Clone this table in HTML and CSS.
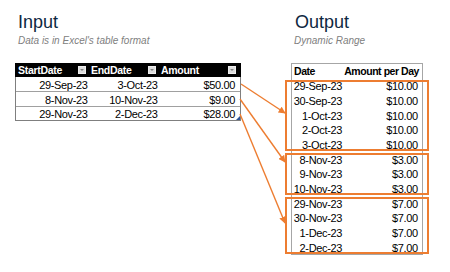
FILE: index.html
```html
<!DOCTYPE html>
<html lang="en">
<head>
<meta charset="utf-8">
<title>Input / Output</title>
<link rel="stylesheet" href="styles.css">
</head>
<body>
<div class="sheet">
  <section class="panel panel-input">
    <h1 class="title">Input</h1>
    <p class="subtitle">Data is in Excel's table format</p>
    <div class="xl-table">
      <div class="xl-head">
        <div class="hcell">StartDate<span class="dd"></span></div>
        <div class="hcell">EndDate<span class="dd"></span></div>
        <div class="hcell hcell-last">Amount<span class="dd"></span></div>
      </div>
      <div class="xl-row"><div class="cell">29-Sep-23</div><div class="cell">3-Oct-23</div><div class="cell cell-last">$50.00</div></div>
      <div class="xl-row"><div class="cell">8-Nov-23</div><div class="cell">10-Nov-23</div><div class="cell cell-last">$9.00</div></div>
      <div class="xl-row"><div class="cell">29-Nov-23</div><div class="cell">2-Dec-23</div><div class="cell cell-last">$28.00</div></div>
      <span class="resize"></span>
    </div>
  </section>
  <section class="panel panel-output">
    <h1 class="title">Output</h1>
    <p class="subtitle">Dynamic Range</p>
    <div class="out-table">
      <div class="out-head"><div class="oh-date">Date</div><div class="oh-amt">Amount per Day</div></div>
      <div class="group">
        <div class="out-row"><div class="od">29-Sep-23</div><div class="oa">$10.00</div></div>
        <div class="out-row"><div class="od">30-Sep-23</div><div class="oa">$10.00</div></div>
        <div class="out-row"><div class="od">1-Oct-23</div><div class="oa">$10.00</div></div>
        <div class="out-row"><div class="od">2-Oct-23</div><div class="oa">$10.00</div></div>
        <div class="out-row"><div class="od">3-Oct-23</div><div class="oa">$10.00</div></div>
      </div>
      <div class="group">
        <div class="out-row"><div class="od">8-Nov-23</div><div class="oa">$3.00</div></div>
        <div class="out-row"><div class="od">9-Nov-23</div><div class="oa">$3.00</div></div>
        <div class="out-row"><div class="od">10-Nov-23</div><div class="oa">$3.00</div></div>
      </div>
      <div class="group">
        <div class="out-row"><div class="od">29-Nov-23</div><div class="oa">$7.00</div></div>
        <div class="out-row"><div class="od">30-Nov-23</div><div class="oa">$7.00</div></div>
        <div class="out-row"><div class="od">1-Dec-23</div><div class="oa">$7.00</div></div>
        <div class="out-row"><div class="od">2-Dec-23</div><div class="oa">$7.00</div></div>
      </div>
    </div>
  </section>
  <svg class="arrows" width="450" height="272" viewBox="0 0 450 272">
    <defs>
      <marker id="ah" viewBox="0 0 10 10" refX="9" refY="5" markerWidth="5" markerHeight="5" orient="auto" markerUnits="strokeWidth">
        <path d="M0 0 L10 5 L0 10 z" fill="#ed7d31"/>
      </marker>
    </defs>
    <line x1="241" y1="84" x2="285" y2="113" stroke="#ed7d31" stroke-width="1.4" marker-end="url(#ah)"/>
    <line x1="240" y1="99" x2="285" y2="162" stroke="#ed7d31" stroke-width="1.4" marker-end="url(#ah)"/>
    <line x1="240" y1="114" x2="285" y2="223" stroke="#ed7d31" stroke-width="1.4" marker-end="url(#ah)"/>
  </svg>
</div>
</body>
</html>
```

FILE: styles.css
```css
body {
  margin: 0;
  background: #ffffff;
}

.sheet {
  position: relative;
  width: 450px;
  height: 272px;
  box-sizing: border-box;
  padding: 10.5px 0 0 15px;
  display: flex;
  gap: 50px;
  font-family: "Liberation Sans", Arial, sans-serif;
  color: #000;
  white-space: nowrap;
}

.panel {
  display: flex;
  flex-direction: column;
}

.panel-input {
  width: 226px;
}

.panel-output {
  width: 132px;
}

.title {
  margin: 0;
  font-size: 18px;
  line-height: 22px;
  font-weight: normal;
  color: #0e2841;
  padding-left: 3px;
}

.panel-output .title {
  padding-left: 4px;
}

.subtitle {
  margin: 2.5px 0 0;
  font-style: italic;
  font-size: 10px;
  line-height: 12px;
  color: #808080;
  padding-left: 3px;
}

/* ---------- Input (Excel table) ---------- */
.xl-table {
  position: relative;
  margin-top: 15.5px;
  border: 1px solid #7f7f7f;
  border-top: none;
  font-size: 11px;
  letter-spacing: -0.35px;
}

.xl-head,
.xl-row {
  display: grid;
  grid-template-columns: 73px 70px 81px;
}

.xl-head {
  height: 14.5px;
  background: #000;
  color: #fff;
  font-weight: bold;
  font-size: 10.5px;
  letter-spacing: -0.3px;
  margin: 0 -1px;
  padding: 0 1px;
}

.hcell {
  display: flex;
  align-items: center;
  justify-content: space-between;
  padding: 0 3px 0 2px;
  line-height: 14.5px;
}

.hcell-last {
  padding-right: 4px;
}

.dd {
  position: relative;
  width: 8px;
  height: 8px;
  box-sizing: border-box;
  background: #dcdcdc;
  border: 1px solid #ececec;
}

.dd::after {
  content: "";
  position: absolute;
  left: 1px;
  top: 2.5px;
  border-left: 2px solid transparent;
  border-right: 2px solid transparent;
  border-top: 2px solid #808080;
}

.xl-row {
  height: 14.67px;
  box-sizing: border-box;
  border-top: 1px solid #a0a0a0;
}

.xl-row:nth-child(2) {
  border-top: none;
  height: 14.17px;
}

.cell {
  text-align: right;
  padding: 1.5px 1.5px 0 0;
  line-height: 12.67px;
}

.cell-last {
  padding-right: 5px;
}

.resize {
  position: absolute;
  right: 0;
  bottom: 0;
  width: 0;
  height: 0;
  border-left: 4px solid transparent;
  border-bottom: 4px solid #2f5597;
}

/* ---------- Output (dynamic range) ---------- */
.out-table {
  margin-top: 15.5px;
  border: 1px solid #a6a6a6;
  font-size: 11px;
  letter-spacing: -0.35px;
}

.out-head {
  display: flex;
  justify-content: space-between;
  height: 14.5px;
  font-weight: bold;
  font-size: 10.5px;
  letter-spacing: -0.45px;
  line-height: 14.5px;
}

.out-row {
  display: grid;
  grid-template-columns: 52px 78px;
}

.oh-date {
  padding-left: 2px;
}

.oh-amt {
  text-align: right;
  padding-right: 3px;
}

.group {
  position: relative;
}

.group::after {
  content: "";
  position: absolute;
  top: 1.5px;
  bottom: 0;
  left: -7px;
  right: -7px;
  border: 2px solid #ed7d31;
  pointer-events: none;
}

.out-row {
  height: 14.67px;
  box-sizing: border-box;
  padding-top: 2.3px;
  line-height: 12.37px;
}

.od {
  text-align: right;
  padding-right: 2px;
}

.oa {
  text-align: right;
  padding-right: 4.3px;
}

/* ---------- Arrows overlay ---------- */
.arrows {
  position: absolute;
  left: 0;
  top: 0;
  pointer-events: none;
}
```
